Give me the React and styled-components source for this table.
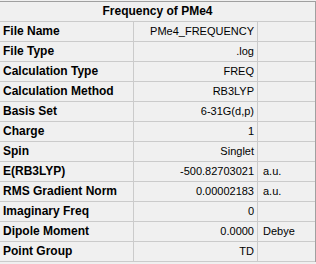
import React from 'react'
import styled, { createGlobalStyle } from 'styled-components'

const GlobalStyle = createGlobalStyle`
  html, body {
    margin: 0;
    padding: 0;
    background: #f0f0f0;
  }
`

const Panel = styled.div`
  width: 316px;
  height: 264px;
  padding-top: 1px;
  box-sizing: border-box;
  background: #f0f0f0;
  font-family: "Liberation Sans", Arial, sans-serif;
  color: #000;
`

const Table = styled.div`
  width: 316px;
  box-sizing: border-box;
  border-top: 1px solid #a0a0a0;
  border-right: 1px solid #a0a0a0;
`

const Title = styled.div`
  height: 19px;
  line-height: 19px;
  border-bottom: 1px solid #cbcbcb;
  text-align: center;
  font-weight: bold;
  font-size: 12px;
`

const Grid = styled.div`
  display: grid;
  grid-template-columns: 134px 124px 1fr;
  grid-auto-rows: 20px;
`

const Cell = styled.div`
  box-sizing: border-box;
  height: 20px;
  line-height: 19px;
  border-bottom: 1px solid #cbcbcb;
  border-right: ${p => (p.$last ? 'none' : '1px solid #cbcbcb')};
  white-space: nowrap;
  overflow: hidden;
`

const Label = styled(Cell)`
  padding-left: 3px;
  font-weight: bold;
  font-size: 12px;
`

const Value = styled(Cell)`
  padding-right: 3px;
  text-align: right;
  font-size: 11px;
`

const Unit = styled(Cell)`
  padding-left: 5px;
  font-size: 11px;
`

const rows = [
  ['File Name', 'PMe4_FREQUENCY', ''],
  ['File Type', '.log', ''],
  ['Calculation Type', 'FREQ', ''],
  ['Calculation Method', 'RB3LYP', ''],
  ['Basis Set', '6-31G(d,p)', ''],
  ['Charge', '1', ''],
  ['Spin', 'Singlet', ''],
  ['E(RB3LYP)', '-500.82703021', 'a.u.'],
  ['RMS Gradient Norm', '0.00002183', 'a.u.'],
  ['Imaginary Freq', '0', ''],
  ['Dipole Moment', '0.0000', 'Debye'],
  ['Point Group', 'TD', '']
]

export default function App() {
  return (
    <>
      <GlobalStyle />
      <Panel>
        <Table>
          <Title>Frequency of PMe4</Title>
          <Grid>
            {rows.map(([label, value, unit]) => (
              <React.Fragment key={label}>
                <Label>{label}</Label>
                <Value>{value}</Value>
                <Unit $last>{unit}</Unit>
              </React.Fragment>
            ))}
          </Grid>
        </Table>
      </Panel>
    </>
  )
}
